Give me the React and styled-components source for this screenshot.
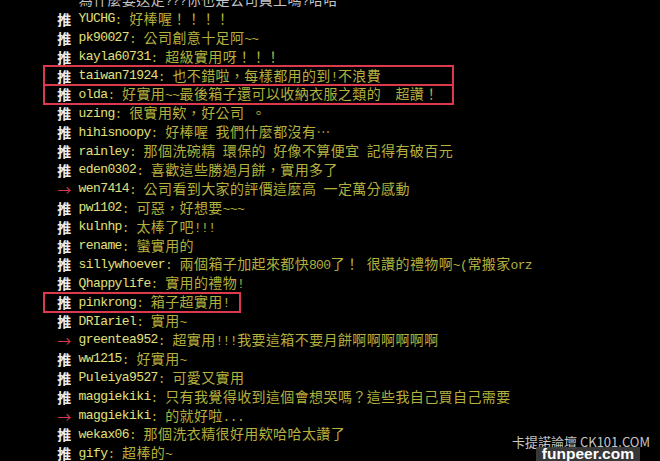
import React from 'react'
import styled, { createGlobalStyle } from 'styled-components'

const CELL = 7.2

const GlobalStyle = createGlobalStyle`
  html, body {
    margin: 0;
    padding: 0;
    background: #000;
  }
  #root {
    width: 660px;
    height: 461px;
    position: relative;
    overflow: hidden;
    background: #000;
  }
`

const Screen = styled.div`
  display: flex;
  flex-direction: column;
  align-items: flex-start;
  margin-top: -9.5px;
  padding-left: 44px;
`

const Row = styled.div`
  box-sizing: border-box;
  display: flex;
  align-items: center;
  height: 18.9px;
  padding-left: 13px;
  white-space: pre;
  width: ${p => (p.$box ? `${p.$box}px` : 'auto')};
  box-shadow: ${p => (p.$box ? '0 0 0 1px #dc3a4c, inset 0 0 0 1px #dc3a4c' : 'none')};
`

const Mark = styled.span`
  display: inline-block;
  width: ${CELL * 2}px;
  margin-right: ${CELL}px;
  text-align: center;
  font-family: "Noto Sans CJK TC", sans-serif;
  font-size: 14px;
  line-height: 1;
  font-weight: ${p => (p.$kind === 'push' ? 700 : 400)};
  color: ${p => (p.$kind === 'arrow' ? '#d2384e' : '#ececec')};
`

const Line = styled.span`
  display: inline-flex;
  align-items: baseline;
  color: ${p => p.$tone};
`

const Wide = styled.span`
  display: inline-block;
  width: ${CELL * 2}px;
  text-align: center;
  font-family: "Noto Sans CJK TC", sans-serif;
  font-size: 14px;
  line-height: 1;
`

const Narrow = styled.span`
  font-family: "Liberation Mono", monospace;
  font-size: 13px;
  letter-spacing: -0.6px;
  line-height: 1;
`

const Watermark = styled.div`
  position: absolute;
  right: 12px;
  bottom: 0;
  display: flex;
  flex-direction: column;
  align-items: flex-end;
`

const SiteName = styled.div`
  font-family: "Noto Sans CJK TC", "Liberation Sans", sans-serif;
  font-size: 13px;
  line-height: 14px;
  color: rgba(235, 235, 235, 0.85);
  margin-right: -2px;
`

const SiteBadge = styled.div`
  background: rgba(60, 60, 60, 0.92);
  padding: 0 6px;
  height: 14px;
  margin-right: 8px;
  margin-top: -2px;
  display: flex;
  align-items: flex-start;
  font-family: "Liberation Sans", sans-serif;
  font-weight: 700;
  font-size: 15.5px;
  line-height: 14px;
  color: #fff;
`

const WIDE_RE = /[\u1100-\u115F\u2026\u2190-\u21FF\u2E80-\uA4CF\uAC00-\uD7A3\uF900-\uFAFF\uFE30-\uFE4F\uFF00-\uFF60\uFFE0-\uFFE6]/

function Term({ text }) {
  const parts = []
  let buf = ''
  Array.from(text).forEach((ch, i) => {
    if (WIDE_RE.test(ch)) {
      if (buf) {
        parts.push(<Narrow key={`n${i}`}>{buf}</Narrow>)
        buf = ''
      }
      parts.push(<Wide key={`w${i}`}>{ch}</Wide>)
    } else {
      buf += ch
    }
  })
  if (buf) parts.push(<Narrow key="end">{buf}</Narrow>)
  return parts
}

const pushes = [
  { mark: 'push', id: 'YUCHG', text: '好棒喔！！！！' },
  { mark: 'push', id: 'pk90027', text: '公司創意十足阿~~' },
  { mark: 'push', id: 'kayla60731', text: '超級實用呀！！！' },
  { mark: 'push', id: 'taiwan71924', text: '也不錯啦，每樣都用的到!不浪費', box: 409 },
  { mark: 'push', id: 'olda', text: '好實用~~最後箱子還可以收納衣服之類的  超讚！', box: 409 },
  { mark: 'push', id: 'uzing', text: '很實用欸，好公司 。' },
  { mark: 'push', id: 'hihisnoopy', text: '好棒喔 我們什麼都沒有…' },
  { mark: 'push', id: 'rainley', text: '那個洗碗精 環保的 好像不算便宜 記得有破百元' },
  { mark: 'push', id: 'eden0302', text: '喜歡這些勝過月餅，實用多了' },
  { mark: 'arrow', id: 'wen7414', text: '公司看到大家的評價這麼高 一定萬分感動' },
  { mark: 'push', id: 'pw1102', text: '可惡，好想要~~~' },
  { mark: 'push', id: 'kulnhp', text: '太棒了吧!!!' },
  { mark: 'push', id: 'rename', text: '蠻實用的' },
  { mark: 'push', id: 'sillywhoever', text: '兩個箱子加起來都快800了！ 很讚的禮物啊~(常搬家orz' },
  { mark: 'push', id: 'Qhappylife', text: '實用的禮物!' },
  { mark: 'push', id: 'pinkrong', text: '箱子超實用!', box: 196 },
  { mark: 'push', id: 'DRIariel', text: '實用~' },
  { mark: 'arrow', id: 'greentea952', text: '超實用!!!我要這箱不要月餅啊啊啊啊啊啊' },
  { mark: 'push', id: 'ww1215', text: '好實用~' },
  { mark: 'push', id: 'Puleiya9527', text: '可愛又實用' },
  { mark: 'push', id: 'maggiekiki', text: '只有我覺得收到這個會想哭嗎？這些我自己買自己需要' },
  { mark: 'arrow', id: 'maggiekiki', text: '的就好啦...' },
  { mark: 'push', id: 'wekax06', text: '那個洗衣精很好用欸哈哈太讚了' },
  { mark: 'push', id: 'gify', text: '超棒的~' },
]

export default function App() {
  return (
    <>
      <GlobalStyle />
      <Screen>
        <Row>
          <Mark $kind="none" />
          <Line $tone="#c4c4c4">
            <Term text="為什麼要送走???你也是公司員工嗎?哈哈" />
          </Line>
        </Row>
        {pushes.map((p, i) => (
          <Row key={i} $box={p.box}>
            <Mark $kind={p.mark}>{p.mark === 'arrow' ? '→' : '推'}</Mark>
            <Line $tone="#e2e07e">
              <Term text={p.id} />
            </Line>
            <Line $tone="#b4b03e">
              <Term text={': ' + p.text} />
            </Line>
          </Row>
        ))}
      </Screen>
      <Watermark>
        <SiteName>卡提諾論壇 CK101.COM</SiteName>
        <SiteBadge>funpeer.com</SiteBadge>
      </Watermark>
    </>
  )
}
